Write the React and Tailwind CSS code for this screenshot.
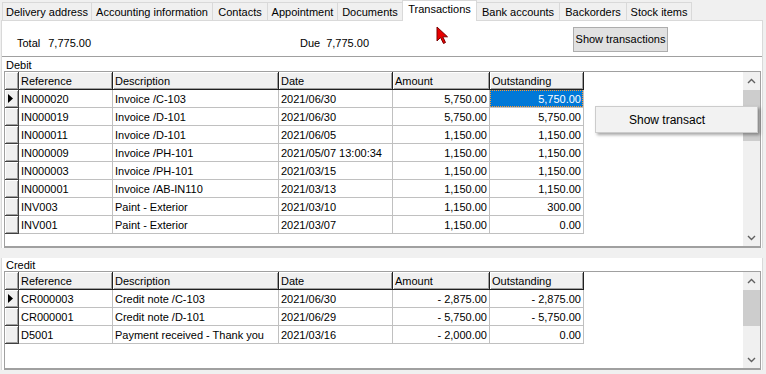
import React from 'react';

const tabs = [
  { label: 'Delivery address', w: 'w-[89px]' },
  { label: 'Accounting information', w: 'w-[121px]' },
  { label: 'Contacts', w: 'w-[55px]' },
  { label: 'Appointment', w: 'w-[70px]' },
  { label: 'Documents', w: 'w-[65px]' },
  { label: 'Transactions', w: 'w-[75px]', active: true },
  { label: 'Bank accounts', w: 'w-[82px]', noLeft: true },
  { label: 'Backorders', w: 'w-[67px]' },
  { label: 'Stock items', w: 'w-[66px]', last: true },
];

const debitRows = [
  ['IN000020', 'Invoice /C-103', '2021/06/30', '5,750.00', '5,750.00'],
  ['IN000019', 'Invoice /D-101', '2021/06/30', '5,750.00', '5,750.00'],
  ['IN000011', 'Invoice /D-101', '2021/06/05', '1,150.00', '1,150.00'],
  ['IN000009', 'Invoice /PH-101', '2021/05/07 13:00:34', '1,150.00', '1,150.00'],
  ['IN000003', 'Invoice /PH-101', '2021/03/15', '1,150.00', '1,150.00'],
  ['IN000001', 'Invoice /AB-IN110', '2021/03/13', '1,150.00', '1,150.00'],
  ['INV003', 'Paint - Exterior', '2021/03/10', '1,150.00', '300.00'],
  ['INV001', 'Paint - Exterior', '2021/03/07', '1,150.00', '0.00'],
];

const creditRows = [
  ['CR000003', 'Credit note /C-103', '2021/06/30', '- 2,875.00', '- 2,875.00'],
  ['CR000001', 'Credit note /D-101', '2021/06/29', '- 5,750.00', '- 5,750.00'],
  ['D5001', 'Payment received - Thank you', '2021/03/16', '- 2,000.00', '0.00'],
];

const headers = ['Reference', 'Description', 'Date', 'Amount', 'Outstanding'];
const widths = ['w-[94px]', 'w-[166px]', 'w-[114px]', 'w-[97px]', 'w-[94px]'];
const rightAlign = [false, false, false, true, true];

function Tab({ label, w, active, noLeft, last }) {
  if (active) {
    return (
      <div
        className={`${w} h-[21px] -mb-px bg-white border-t border-l border-r border-[#d9d9d9] relative z-10 flex justify-center pt-[2px] leading-[13px]`}
      >
        {label}
      </div>
    );
  }
  return (
    <div
      className={`${w} h-[18px] bg-[#f0f0f0] border-t border-[#d9d9d9] ${noLeft ? '' : 'border-l'} ${
        last ? 'border-r' : ''
      } flex justify-center pt-[3px] leading-[13px]`}
    >
      {label}
    </div>
  );
}

function Indicator({ arrow }) {
  return (
    <div className="w-[14px] h-[18px] shrink-0 bg-[#f0f0f0] border-r border-b border-[#404040] shadow-[inset_1px_1px_0_#ffffff,inset_-1px_-1px_0_#a0a0a0] flex items-center pl-[3px]">
      {arrow && (
        <svg width="5" height="9" viewBox="0 0 5 9">
          <polygon points="0,0 5,4.5 0,9" fill="#000" />
        </svg>
      )}
    </div>
  );
}

function Chevron({ up }) {
  return (
    <svg width="9" height="6" viewBox="0 0 9 6">
      <polyline
        points={up ? '1,5 4.5,1.5 8,5' : '1,1 4.5,4.5 8,1'}
        fill="none"
        stroke="#606060"
        strokeWidth="1.4"
      />
    </svg>
  );
}

function Grid({ rows, boxH, thumbH, selected }) {
  return (
    <div className={`ml-[2px] w-[757px] ${boxH} border-t border-l border-r border-b-2 border-[#a0a0a0] bg-white flex`}>
      <div className="flex-1 flex flex-col">
        <div className="flex h-[18px]">
          <Indicator />
          {headers.map((h, i) => (
            <div
              key={h}
              className={`${widths[i]} h-[18px] shrink-0 bg-[#f0f0f0] border-r border-b border-[#202020] shadow-[inset_1px_1px_0_#ffffff,inset_-1px_-1px_0_#a0a0a0] pl-[2px] pt-px leading-[16px] whitespace-nowrap overflow-hidden`}
            >
              {h}
            </div>
          ))}
        </div>
        {rows.map((r, ri) => (
          <div key={ri} className="flex h-[18px]">
            <Indicator arrow={ri === 0} />
            {r.map((c, ci) => {
              const isSel = selected && ri === 0 && ci === 4;
              return (
                <div
                  key={ci}
                  className={`${widths[ci]} h-[18px] shrink-0 border-r border-b border-[#c0c0c0] whitespace-nowrap overflow-hidden ${
                    isSel ? 'leading-[17px]' : 'pt-px leading-[16px]'
                  } ${rightAlign[ci] ? 'text-right pr-[2px]' : 'pl-[2px]'}`}
                >
                  {isSel ? (
                    <div className="h-[17px] bg-[#0078d7] text-white border border-dotted border-[#ff9a30] pt-px leading-[14px] -mr-[2px] pr-[1px]">
                      {c}
                    </div>
                  ) : (
                    c
                  )}
                </div>
              );
            })}
          </div>
        ))}
      </div>
      <div className="w-[17px] h-full bg-[#f0f0f0] flex flex-col">
        <div className="h-[17px] flex items-center justify-center">
          <Chevron up />
        </div>
        <div className={`${thumbH} mt-px bg-[#cdcdcd]`} />
        <div className="flex-1" />
        <div className="h-[17px] flex items-center justify-center">
          <Chevron />
        </div>
      </div>
    </div>
  );
}

export default function App() {
  return (
    <div
      className="relative w-[766px] h-[374px] overflow-hidden bg-[#f0f0f0] text-[11px] text-black"
      style={{ fontFamily: '"Liberation Sans", Arial, sans-serif' }}
    >
      <div className="flex items-end h-[20px] pl-[2px]">
        {tabs.map((t) => (
          <Tab key={t.label} {...t} />
        ))}
      </div>
      <div className="ml-px w-[762px] border-l border-r border-t border-[#d9d9d9] bg-white">
        <div className="h-[35px] flex items-start">
          <div className="w-[298px] pl-[15px] mt-[16px] flex leading-[13px]">
            <span>Total</span>
            <span className="ml-[8px]">7,775.00</span>
          </div>
          <div className="w-[273px] mt-[16px] flex leading-[13px]">
            <span>Due</span>
            <span className="ml-[6px]">7,775.00</span>
          </div>
          <div className="mt-[6px] w-[95px] h-[25px] bg-[#e1e1e1] border border-[#adadad] flex items-center justify-center">
            Show transactions
          </div>
        </div>
        <div className="border-t border-[#a0a0a0]">
          <div className="h-[14px] leading-[14px] pl-[4px] pt-px">Debit</div>
          <Grid rows={debitRows} boxH="h-[177px]" thumbH="h-[51px]" selected />
        </div>
      </div>
      <div className="h-[10px]" />
      <div className="ml-px w-[762px] border-l border-r border-[#d9d9d9] bg-white">
        <div className="h-[13px] leading-[13px] pl-[4px] pt-px">Credit</div>
        <Grid rows={creditRows} boxH="h-[99px]" thumbH="h-[36px]" />
      </div>

      {/* context menu */}
      <div className="absolute left-[595px] top-[106px] w-[163px] h-[27px] bg-[#f2f2f2] border border-[#cccccc] shadow-[2px_2px_3px_rgba(0,0,0,0.35)] flex items-center pl-[33px] text-[12px] text-[#000]">
        Show transact
      </div>

      {/* red mouse cursor */}
      <svg className="absolute left-[436px] top-[26px]" width="14" height="19" viewBox="0 0 14 19">
        <polygon
          points="1,1 1,15 4.5,11.5 7.5,17.5 9.5,16.5 6.8,10.8 11.5,10.8"
          fill="#e80000"
          stroke="#7a0000"
          strokeWidth="1"
          strokeLinejoin="round"
        />
      </svg>
    </div>
  );
}
